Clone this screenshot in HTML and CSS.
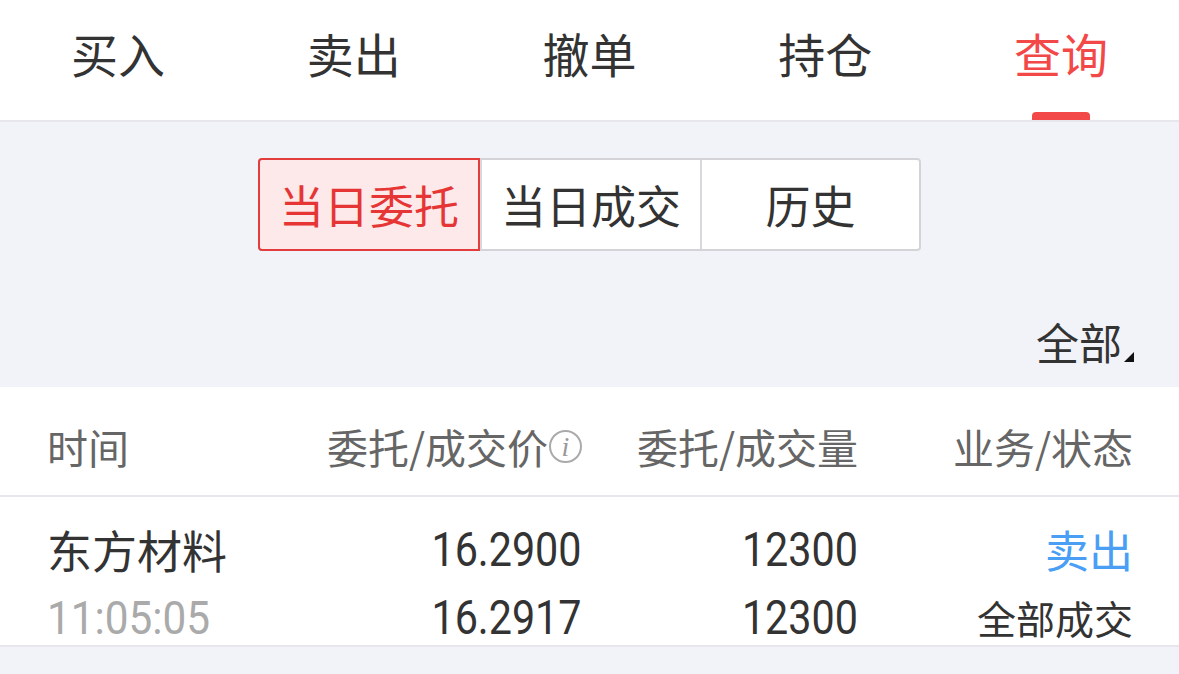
FILE: index.html
```html
<!DOCTYPE html>
<html lang="zh-CN">
<head>
    <meta charset="UTF-8">
    <title>查询</title>
    <link rel="stylesheet" href="styles.css">
</head>
<body>

<div class="tabs">
    <div class="tab">买入</div>
    <div class="tab">卖出</div>
    <div class="tab">撤单</div>
    <div class="tab">持仓</div>
    <div class="tab active">查询</div>
</div>

<div class="seg-wrap">
    <div class="seg">
        <div class="seg-item on">当日委托</div>
        <div class="seg-item">当日成交</div>
        <div class="seg-item">历史</div>
    </div>
</div>

<div class="filter">
    <span class="filter-btn">全部</span>
</div>

<div class="table">
    <div class="row head">
        <div class="cell left">时间</div>
        <div class="cell">委托/成交价<span class="info">i</span></div>
        <div class="cell">委托/成交量</div>
        <div class="cell">业务/状态</div>
    </div>
    <div class="row body">
        <div class="cell left">
            <div class="name">东方材料</div>
            <div><span class="time">11:05:05</span></div>
        </div>
        <div class="cell">
            <div><span class="num">16.2900</span></div>
            <div><span class="num">16.2917</span></div>
        </div>
        <div class="cell">
            <div><span class="num">12300</span></div>
            <div><span class="num">12300</span></div>
        </div>
        <div class="cell">
            <div class="type sell">卖出</div>
            <div class="status">全部成交</div>
        </div>
    </div>
</div>

</body>
</html>
```

FILE: styles.css
```css
html,body{
    height: 100%;
}
body{
    margin: 0;
    background: #f2f3f8;
    font-family: "Noto Sans CJK SC", "Noto Sans", sans-serif;
    color: #333;
    overflow: hidden;
}

/* 顶部标签 */
.tabs{
    display: grid;
    grid-template-columns: repeat(5, 1fr);
    height: 120px;
    background: #fff;
    border-bottom: 2px solid #e6e6ec;
}
.tab{
    position: relative;
    display: flex;
    align-items: center;
    justify-content: center;
    padding-bottom: 16px;
    font-size: 47px;
    color: #333;
}
.tab.active{
    color: #f24848;
}
.tab.active:after{
    content: '';
    position: absolute;
    bottom: 0;
    left: 50%;
    width: 58px;
    height: 8px;
    margin-left: -29px;
    border-radius: 4px 4px 0 0;
    background: #f24848;
}

/* 分段切换 */
.seg-wrap{
    display: flex;
    justify-content: center;
    padding-top: 36px;
}
.seg{
    display: flex;
    background: #fff;
    border: 2px solid #d4d4d8;
    border-radius: 4px;
}
.seg-item{
    width: 218px;
    height: 89px;
    display: flex;
    align-items: center;
    justify-content: center;
    font-size: 45px;
    color: #333;
    border-left: 2px solid #d8d8dc;
}
.seg-item:first-child{
    border-left: none;
}
.seg-item:last-child{
    width: 217px;
}
.seg-item.on{
    margin: -2px 0 -2px -2px;
    border: 2px solid #e23c3c;
    border-radius: 4px 0 0 4px;
    background: #fde8ea;
    color: #e63535;
}

/* 筛选 */
.filter{
    display: flex;
    justify-content: flex-end;
    align-items: center;
    height: 136px;
    padding: 44px 57px 0 0;
    box-sizing: border-box;
}
.filter-btn{
    position: relative;
    font-size: 43px;
    color: #333;
}
.filter-btn:after{
    content: '';
    position: absolute;
    right: -12px;
    bottom: 10px;
    width: 0;
    height: 0;
    border-left: 10px solid transparent;
    border-bottom: 10px solid #111;
}

/* 表格 */
.table{
    background: #fff;
}
.row{
    display: grid;
    grid-template-columns: 259px 276px 276px 275px;
    padding: 0 46px 0 47px;
    border-bottom: 2px solid #e6e6ec;
}
.cell{
    text-align: right;
}
.cell.left{
    text-align: left;
}
.head{
    height: 110px;
    padding-top: 10px;
    box-sizing: border-box;
    align-items: center;
    font-size: 41px;
    color: #666;
}
.head .cell{
    display: flex;
    justify-content: flex-end;
    align-items: center;
}
.head .cell.left{
    justify-content: flex-start;
}
.info{
    width: 33px;
    height: 33px;
    margin-left: 1px;
    border: 2px solid #aaa;
    border-radius: 50%;
    box-sizing: border-box;
    font-family: "Liberation Serif", serif;
    font-style: italic;
    font-size: 28px;
    line-height: 29px;
    text-align: center;
    color: #999;
}
.body{
    height: 150px;
    padding-top: 20px;
    box-sizing: border-box;
}
.body .cell > div{
    height: 65px;
    line-height: 65px;
}
.body .cell > div + div{
    margin-top: 3px;
}
.name{
    font-size: 45px;
    color: #333;
}
.time{
    display: inline-block;
    font-family: "Roboto", sans-serif;
    font-size: 47px;
    color: #aaa;
    transform: scaleX(0.9);
    transform-origin: left center;
}
.num{
    display: inline-block;
    font-family: "Roboto", sans-serif;
    font-size: 48px;
    color: #333;
    transform: scaleX(0.86);
    transform-origin: right center;
}
.type{
    font-size: 44px;
}
.sell{
    color: #4a9ff5;
}
.status{
    font-size: 39px;
    color: #333;
}
```
